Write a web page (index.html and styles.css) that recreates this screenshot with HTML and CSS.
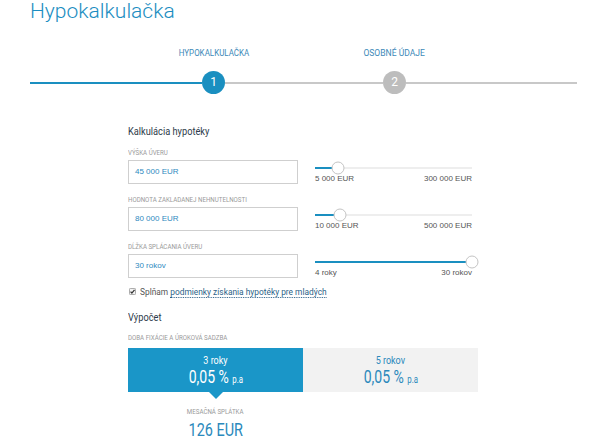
FILE: index.html
```html
<!DOCTYPE html>
<html lang="sk">
<head>
<meta charset="utf-8">
<title>Hypokalkulačka</title>
<link rel="stylesheet" href="styles.css">
</head>
<body>
<h1 class="title">Hypokalkulačka</h1>

<div class="steps">
  <div class="step-label s1"><span class="cn">HYPOKALKULAČKA</span></div>
  <div class="step-label s2"><span class="cn">OSOBNÉ ÚDAJE</span></div>
  <div class="line line-done"></div>
  <div class="circle circle-active">1</div>
  <div class="line"></div>
  <div class="circle">2</div>
  <div class="line"></div>
</div>

<section class="calc">
  <h2 class="heading"><span class="cn cn-left">Kalkulácia hypotéky</span></h2>

  <div class="field">
    <div class="field-label"><span class="cn cn-left">VÝŠKA ÚVERU</span></div>
    <div class="input">45 000 EUR</div>
    <div class="slider">
      <div class="track"><div class="fill" style="width:14.6%"></div><div class="thumb" style="left:14.6%"></div></div>
      <div class="range"><span>5 000 EUR</span><span>300 000 EUR</span></div>
    </div>
  </div>

  <div class="field">
    <div class="field-label"><span class="cn cn-left">HODNOTA ZAKLADANEJ NEHNUTELNOSTI</span></div>
    <div class="input">80 000 EUR</div>
    <div class="slider">
      <div class="track"><div class="fill" style="width:16%"></div><div class="thumb" style="left:16%"></div></div>
      <div class="range"><span>10 000 EUR</span><span>500 000 EUR</span></div>
    </div>
  </div>

  <div class="field">
    <div class="field-label"><span class="cn cn-left">DĹŽKA SPLÁCANIA ÚVERU</span></div>
    <div class="input">30 rokov</div>
    <div class="slider">
      <div class="track"><div class="fill" style="width:100%"></div><div class="thumb" style="left:100%"></div></div>
      <div class="range"><span>4 roky</span><span>30 rokov</span></div>
    </div>
  </div>

  <div class="check">
    <svg class="box" width="7" height="7" viewBox="0 0 8 8"><rect x="0.5" y="0.5" width="7" height="7" rx="1" fill="#f4f4f4" stroke="#9a9a9a"/><path d="M1.8 4.2 L3.3 5.8 L6.3 2.2" fill="none" stroke="#333" stroke-width="1.5"/></svg>
    <span class="cn cn-left check-text">Splňam <a class="link">podmienky získania hypotéky pre mladých</a></span>
  </div>

  <h2 class="heading heading-2"><span class="cn cn-left">Výpočet</span></h2>
  <div class="field-label label-fix"><span class="cn cn-left">DOBA FIXÁCIE A ÚROKOVÁ SADZBA</span></div>
  <div class="options">
    <div class="option option-active">
      <div class="opt-years"><span class="cn">3 roky</span></div>
      <div class="opt-rate"><span class="cn cn-rate">0,05 % <small>p.a</small></span></div>
    </div>
    <div class="option">
      <div class="opt-years"><span class="cn">5 rokov</span></div>
      <div class="opt-rate"><span class="cn cn-rate">0,05 % <small>p.a</small></span></div>
    </div>
  </div>

  <div class="result">
    <div class="field-label"><span class="cn">MESAČNÁ SPLÁTKA</span></div>
    <div class="amount"><span class="cn cn-amount">126 EUR</span></div>
  </div>
</section>
</body>
</html>
```

FILE: styles.css
```css
html, body {
  margin: 0;
  padding: 0;
  background: #fff;
}
body {
  font-family: "Liberation Sans", Arial, sans-serif;
  width: 600px;
  height: 445px;
  overflow: hidden;
}

/* condensed look: Roboto narrowed horizontally */
.cn {
  display: inline-block;
  white-space: nowrap;
  transform: scaleX(0.86);
  transform-origin: center;
}
.cn-left { transform-origin: left center; }

.title {
  margin: -1px 0 0 30px;
  font-family: Roboto, "Liberation Sans", sans-serif;
  font-weight: 300;
  font-size: 21px;
  line-height: 24px;
  color: #1b8dc1;
}

.steps {
  margin: 24px 0 0 30px;
  width: 547px;
  display: grid;
  grid-template-columns: 172px 23px 158px 23px 171px;
  grid-template-rows: 12px 23px;
  row-gap: 12px;
  align-items: center;
}
.step-label {
  grid-row: 1;
  display: flex;
  justify-content: center;
  font-family: Roboto, sans-serif;
  font-size: 9.5px;
  line-height: 12px;
  color: #3d89b8;
}
.s1 .cn { transform: scaleX(0.84); }
.s2 .cn { transform: scaleX(0.9); }
.s1 { grid-column: 2; }
.s2 { grid-column: 4; }
.line {
  grid-row: 2;
  height: 2px;
  background: #c8c8c8;
}
.line-done { background: #1a8fc0; }
.circle {
  grid-row: 2;
  width: 23px;
  height: 23px;
  border-radius: 50%;
  background: #bdbdbd;
  color: #fff;
  font-family: Roboto, sans-serif;
  font-size: 12px;
  line-height: 23px;
  text-align: center;
}
.circle-active { background: #1a8fc0; }

.calc {
  margin: 31px 0 0 128px;
  width: 349px;
}
.heading {
  margin: 0;
  font-family: Roboto, sans-serif;
  font-weight: 400;
  font-size: 11px;
  line-height: 14px;
  color: #2d3b4a;
}
.heading .cn { transform: scaleX(0.84); }
.heading-2 { margin-top: 13px; }
.field-label {
  font-family: Roboto, sans-serif;
  font-size: 7px;
  line-height: 9px;
  color: #9a9a9a;
  white-space: nowrap;
}
.field-label .cn { transform: scaleX(0.88); }
.field {
  display: grid;
  grid-template-columns: 170px 157px;
  column-gap: 17px;
  margin-top: 12px;
}
.heading + .field { margin-top: 10px; }
.field .field-label { grid-column: 1 / -1; margin-bottom: 2px; }
.input {
  box-sizing: border-box;
  height: 24px;
  border: 1px solid #cfcfcf;
  padding: 0 6px;
  font-size: 8px;
  line-height: 22px;
  color: #2f8ac0;
}
.slider { padding-top: 7px; }
.track {
  position: relative;
  height: 2px;
  background: #eeeeee;
}
.fill {
  height: 100%;
  background: #1a8fc0;
}
.thumb {
  position: absolute;
  top: 50%;
  width: 13px;
  height: 13px;
  box-sizing: border-box;
  border: 1px solid #c4c4c4;
  border-radius: 50%;
  background: #fff;
  transform: translate(-50%, -50%);
}
.range {
  display: flex;
  justify-content: space-between;
  margin-top: 5px;
  font-size: 8px;
  line-height: 10px;
  color: #555;
}

.check {
  display: flex;
  align-items: center;
  gap: 4px;
  margin-top: 7px;
  padding-left: 1px;
  font-family: Roboto, sans-serif;
  font-size: 9.5px;
  line-height: 13px;
  color: #555;
}
.check .check-text { transform: scaleX(0.88); }
.link {
  color: #2b5f88;
  border-bottom: 1px dotted #2b5f88;
}

.label-fix { margin-top: 9px; }
.options {
  display: flex;
  margin-top: 5px;
  width: 350px;
}
.option {
  position: relative;
  flex: 0 0 175px;
  height: 44px;
  background: #f2f2f2;
  text-align: center;
  color: #2b89bc;
  font-family: Roboto, sans-serif;
}
.option-active {
  background: #1a96c8;
  color: #fff;
}
.option-active::after {
  content: "";
  position: absolute;
  left: 50%;
  bottom: -7px;
  margin-left: -7px;
  border-left: 7px solid transparent;
  border-right: 7px solid transparent;
  border-top: 7px solid #1a96c8;
}
.opt-years {
  padding-top: 7px;
  font-size: 10px;
  line-height: 12px;
}
.opt-years .cn { transform: scaleX(0.9); }
.opt-rate {
  font-size: 18px;
  line-height: 20px;
}
.opt-rate .cn-rate { transform: scaleX(0.78); }
.opt-rate small { font-size: 10px; }

.result {
  width: 175px;
  margin-top: 16px;
  text-align: center;
  font-family: Roboto, sans-serif;
}
.result .field-label .cn { transform: scaleX(0.88); }
.amount {
  margin-top: 3px;
  font-size: 19px;
  line-height: 20px;
  color: #2b89bc;
}
.amount .cn-amount { transform: scaleX(0.76); }
```
